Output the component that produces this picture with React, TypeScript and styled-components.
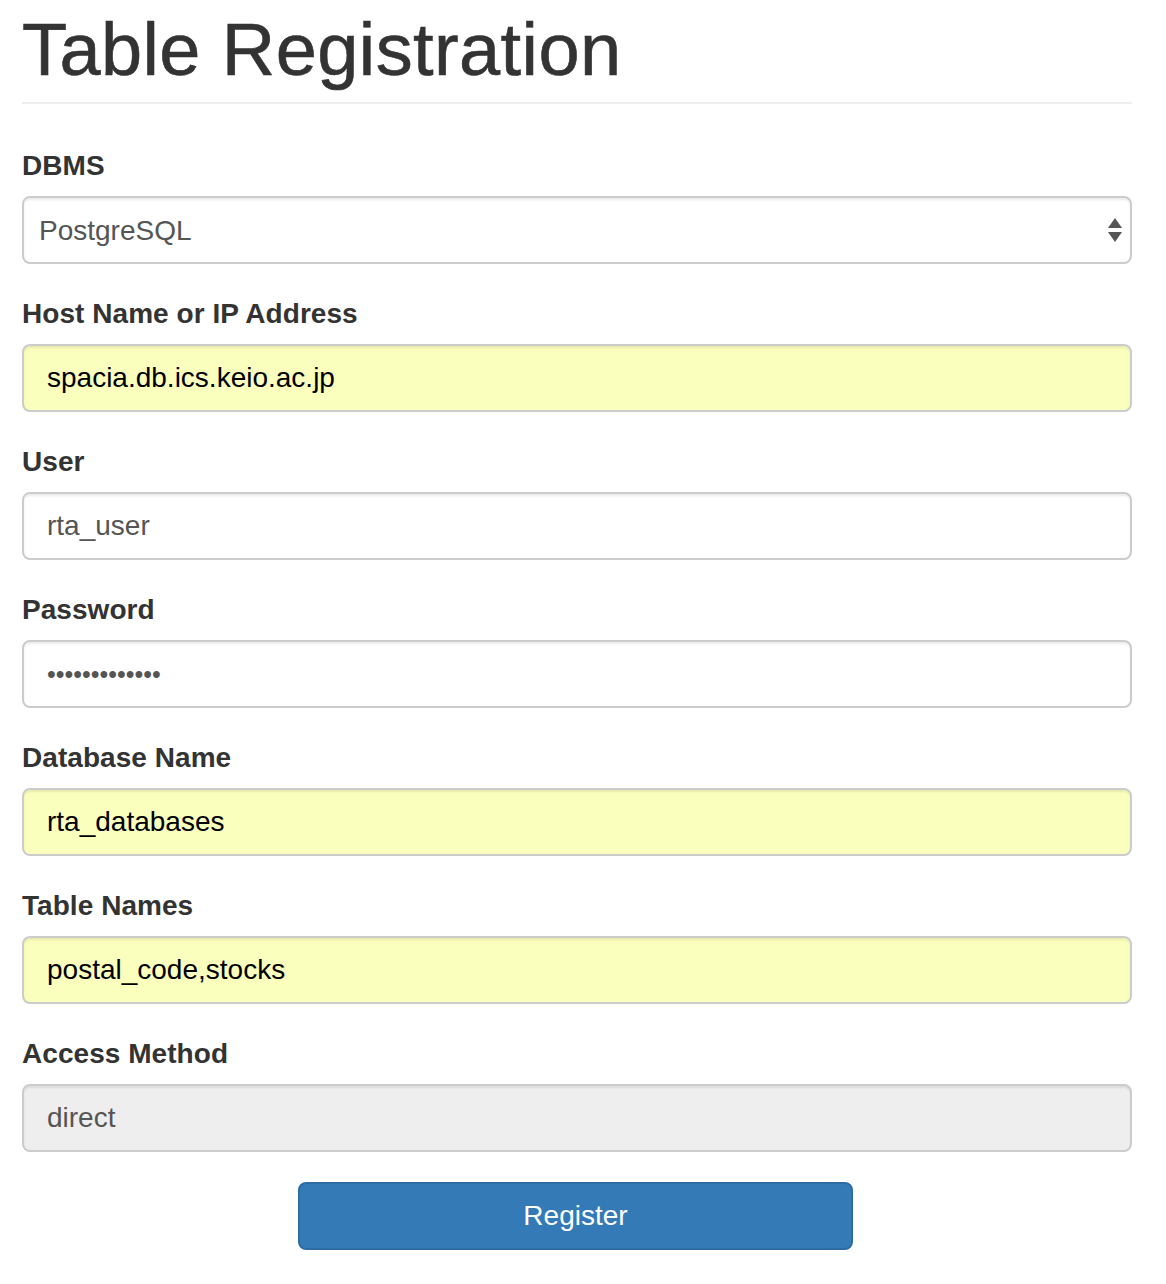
import React from 'react';
import styled, { createGlobalStyle } from 'styled-components';

const GlobalStyle = createGlobalStyle`
  body {
    margin: 0;
    background: #fff;
    font-family: "Liberation Sans", Arial, sans-serif;
    color: #333;
  }
`;

type Field = {
  label: string;
  value: string;
  kind?: 'text' | 'password';
  autofill?: boolean;
  disabled?: boolean;
};

const fields: Field[] = [
  { label: 'Host Name or IP Address', value: 'spacia.db.ics.keio.ac.jp', autofill: true },
  { label: 'User', value: 'rta_user' },
  { label: 'Password', value: 'rta_password1', kind: 'password' },
  { label: 'Database Name', value: 'rta_databases', autofill: true },
  { label: 'Table Names', value: 'postal_code,stocks', autofill: true },
  { label: 'Access Method', value: 'direct', disabled: true },
];

export default function App() {
  return (
    <>
      <GlobalStyle />
      <Page>
        <Header>
          <Title>Table Registration</Title>
        </Header>
        <Form onSubmit={(e) => e.preventDefault()}>
          <Group>
            <Label>DBMS</Label>
            <SelectWrap>
              <Select defaultValue="postgresql">
                <option value="postgresql">PostgreSQL</option>
                <option value="mysql">MySQL</option>
              </Select>
              <Arrows width="16" height="26" viewBox="0 0 16 26">
                <polygon points="8,1 15,11 1,11" fill="#555" />
                <polygon points="1,15 15,15 8,25" fill="#555" />
              </Arrows>
            </SelectWrap>
          </Group>
          {fields.map((f) => (
            <Group key={f.label}>
              <Label>{f.label}</Label>
              <Input
                type={f.kind ?? 'text'}
                value={f.value}
                readOnly
                disabled={f.disabled}
                $autofill={f.autofill}
                $masked={f.kind === 'password'}
              />
            </Group>
          ))}
          <Actions>
            <Button type="submit">Register</Button>
          </Actions>
        </Form>
      </Page>
    </>
  );
}

const Page = styled.div`
  padding: 0 34px 0 22px;
  width: 1110px;
`;

const Header = styled.div`
  padding-top: 9px;
  padding-bottom: 12px;
  border-bottom: 2px solid #eee;
  margin-bottom: 42px;
`;

const Title = styled.h1`
  margin: 0;
  font-size: 74px;
  line-height: 1.1;
  font-weight: 500;
  color: #333;
  letter-spacing: 0.4px;
  -webkit-text-stroke: 0.6px #333;
`;

const Form = styled.form`
  display: flex;
  flex-direction: column;
`;

const Group = styled.div`
  display: flex;
  flex-direction: column;
  margin-bottom: 30px;
`;

const Label = styled.label`
  font-size: 28px;
  line-height: 40px;
  font-weight: 700;
  color: #333;
  margin-bottom: 10px;
  letter-spacing: 0.05px;
`;

const SelectWrap = styled.div`
  position: relative;
`;

const Select = styled.select`
  appearance: none;
  width: 100%;
  height: 68px;
  box-sizing: border-box;
  padding: 0 50px 0 15px;
  font-family: "Liberation Sans", Arial, sans-serif;
  font-size: 28px;
  color: #555;
  background: #fff;
  border: 2px solid #ccc;
  border-radius: 8px;
  box-shadow: inset 0 2px 2px rgba(0, 0, 0, 0.075);
  outline: none;
`;

const Arrows = styled.svg`
  position: absolute;
  right: 9px;
  top: 21px;
  pointer-events: none;
`;

const Input = styled.input<{ $autofill?: boolean; $masked?: boolean }>`
  width: 100%;
  height: 68px;
  box-sizing: border-box;
  padding: 0 23px;
  font-family: "Liberation Sans", Arial, sans-serif;
  font-size: ${(p) => (p.$masked ? '25px' : '28px')};
  color: ${(p) => (p.$autofill ? '#000' : '#555')};
  background: ${(p) => (p.$autofill ? '#faffbd' : '#fff')};
  border: 2px solid #ccc;
  border-radius: 8px;
  box-shadow: inset 0 2px 2px rgba(0, 0, 0, 0.075);
  outline: none;

  &:disabled {
    background: #eee;
    color: #555;
    opacity: 1;
  }
`;

const Actions = styled.div`
  display: flex;
  justify-content: center;
  padding-right: 3px;
`;

const Button = styled.button`
  width: 555px;
  height: 68px;
  font-family: "Liberation Sans", Arial, sans-serif;
  font-size: 28px;
  color: #fff;
  background: #337ab7;
  border: 2px solid #2e6da4;
  border-radius: 8px;
  cursor: pointer;
`;
